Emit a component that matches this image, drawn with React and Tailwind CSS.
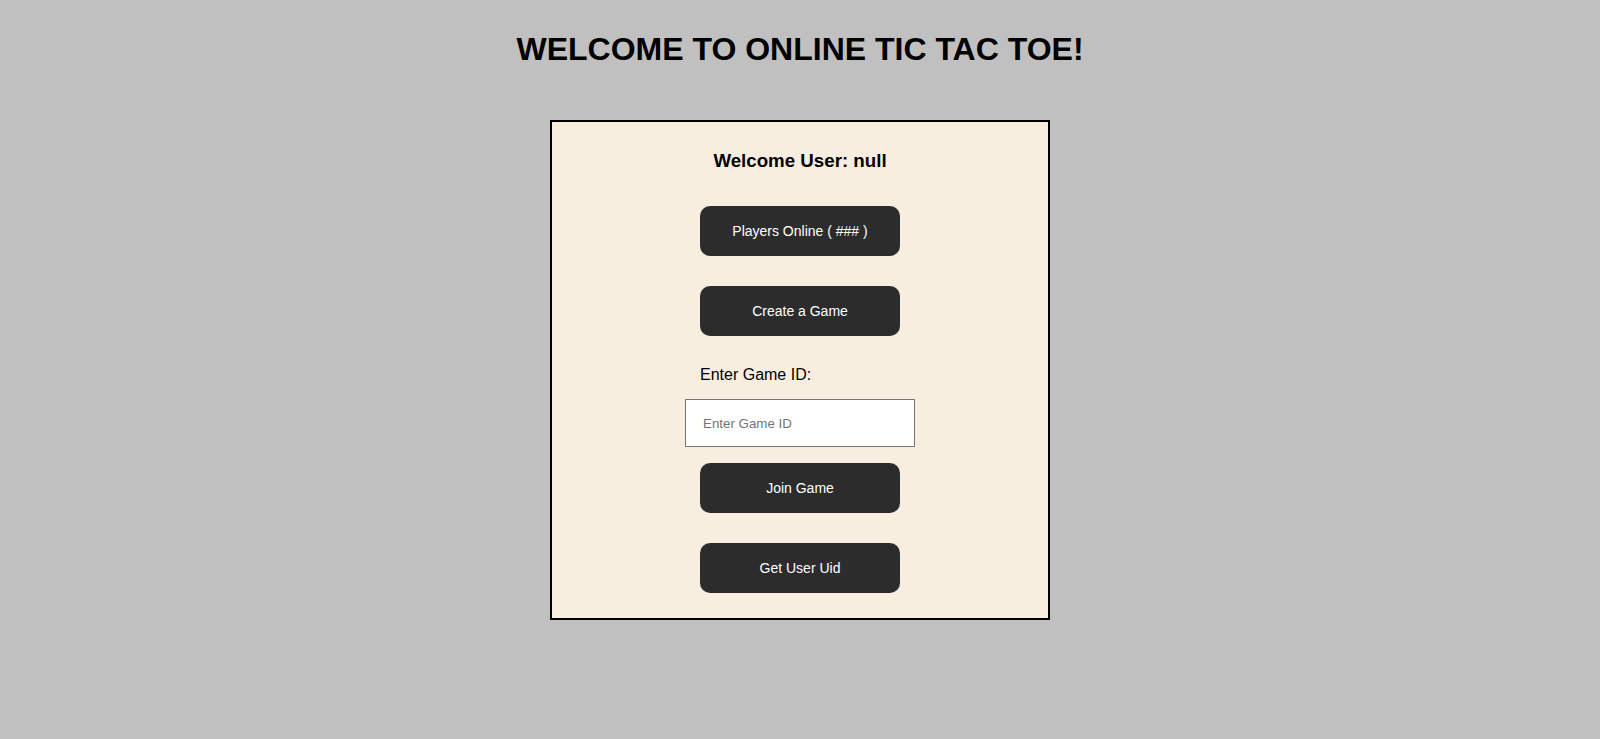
const FONT = "font-['Liberation_Sans',Arial,sans-serif]"

function DarkButton({ children }) {
  return (
    <button
      type="button"
      className="w-[200px] h-[50px] rounded-[10px] bg-[#2c2c2c] text-white text-[14px] leading-none"
    >
      {children}
    </button>
  )
}

export default function App() {
  return (
    <div className={`min-h-screen bg-[#c0c0c0] ${FONT} text-black flex flex-col items-center`}>
      <h1 className="mt-[31px] text-[32px] leading-[37px] font-bold">
        WELCOME TO ONLINE TIC TAC TOE!
      </h1>

      <div className="mt-[52px] w-[500px] h-[500px] border-2 border-black bg-[#f7eedf] flex flex-col items-center">
        <h3 className="mt-[28px] text-[18.72px] leading-[22px] font-bold">Welcome User: null</h3>

        <div className="mt-[34px]">
          <DarkButton>Players Online ( ### )</DarkButton>
        </div>
        <div className="mt-[30px]">
          <DarkButton>Create a Game</DarkButton>
        </div>

        <label className="mt-[30px] w-[200px] text-left text-[16px] leading-[18px]">Enter Game ID:</label>
        <input
          type="text"
          placeholder="Enter Game ID"
          className="mt-[15px] w-[230px] h-[48px] bg-white border border-[#767676] px-[17px] text-[13.33px] placeholder:text-[#757575] outline-none"
        />

        <div className="mt-[16px]">
          <DarkButton>Join Game</DarkButton>
        </div>
        <div className="mt-[30px]">
          <DarkButton>Get User Uid</DarkButton>
        </div>
      </div>
    </div>
  )
}
